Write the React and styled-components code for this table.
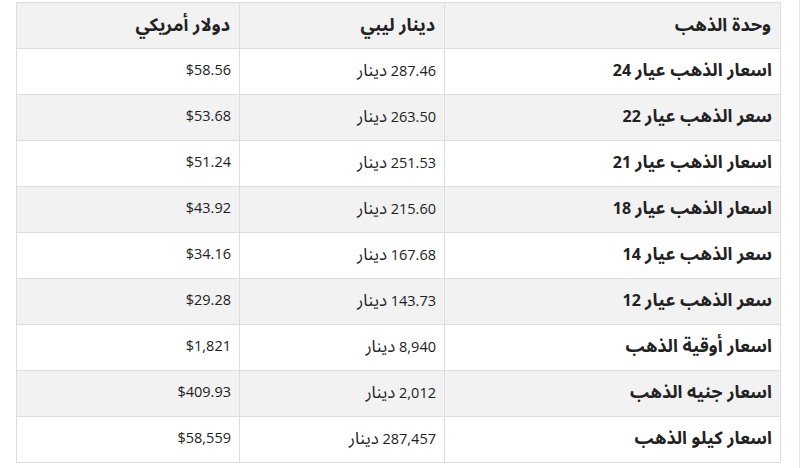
import React from "react";
import styled, { createGlobalStyle } from "styled-components";

const rows = [
  { name: "اسعار الذهب عيار", karat: "24", lyd: "287.46", usd: "$58.56" },
  { name: "سعر الذهب عيار", karat: "22", lyd: "263.50", usd: "$53.68" },
  { name: "اسعار الذهب عيار", karat: "21", lyd: "251.53", usd: "$51.24" },
  { name: "اسعار الذهب عيار", karat: "18", lyd: "215.60", usd: "$43.92" },
  { name: "سعر الذهب عيار", karat: "14", lyd: "167.68", usd: "$34.16" },
  { name: "سعر الذهب عيار", karat: "12", lyd: "143.73", usd: "$29.28" },
  { name: "اسعار أوقية الذهب", lyd: "8,940", usd: "$1,821" },
  { name: "اسعار جنيه الذهب", lyd: "2,012", usd: "$409.93" },
  { name: "اسعار كيلو الذهب", lyd: "287,457", usd: "$58,559" },
];

const GlobalStyle = createGlobalStyle`
  body {
    margin: 0;
    background: #fff;
    font-family: "Open Sans", "Noto Sans Arabic", "DejaVu Sans", sans-serif;
    color: #222;
  }
`;

const Page = styled.div`
  width: 800px;
  height: 468px;
  padding: 2px 0 0 16px;
  border-right: 1px solid #e6e6e6;
  box-sizing: border-box;
`;

const Table = styled.table`
  direction: rtl;
  width: 764px;
  border-collapse: collapse;
  table-layout: fixed;
  border: 1px solid #dedede;
`;

const Col = styled.col`
  width: ${(p) => p.$w}px;
`;

const HeadCell = styled.th`
  height: 42px;
  padding: 0 9px 3px;
  text-align: right;
  font-size: 18px;
  line-height: 1;
  font-weight: 700;
  background: #f2f2f2;
  border: 1px solid #dedede;
`;

const Row = styled.tr`
  background: ${(p) => (p.$striped ? "#f2f2f2" : "#fff")};
`;

const Cell = styled.td`
  height: 42px;
  padding: 0 8px 3px;
  text-align: right;
  line-height: 1;
  font-size: ${(p) => (p.$bold ? "16px" : "14.5px")};
  font-weight: ${(p) => (p.$bold ? 700 : 400)};
  border: 1px solid #dedede;
  white-space: nowrap;
`;

// Arabic words render smaller than the digits in the fallback font
const Ar = styled.span`
  font-size: ${(p) => (p.$bold ? "1.12em" : "1.16em")};
`;

export default function App() {
  return (
    <>
      <GlobalStyle />
      <Page>
        <Table>
          <colgroup>
            <Col $w={336} />
            <Col $w={205} />
            <Col $w={223} />
          </colgroup>
          <thead>
            <tr>
              <HeadCell>وحدة الذهب</HeadCell>
              <HeadCell>دينار ليبي</HeadCell>
              <HeadCell>دولار أمريكي</HeadCell>
            </tr>
          </thead>
          <tbody>
            {rows.map((r, i) => (
              <Row key={i} $striped={i % 2 === 1}>
                <Cell $bold>
                  <Ar $bold>{r.name}</Ar>
                  {r.karat && ` ${r.karat}`}
                </Cell>
                <Cell>
                  {r.lyd} <Ar>دينار</Ar>
                </Cell>
                <Cell>{r.usd}</Cell>
              </Row>
            ))}
          </tbody>
        </Table>
      </Page>
    </>
  );
}
